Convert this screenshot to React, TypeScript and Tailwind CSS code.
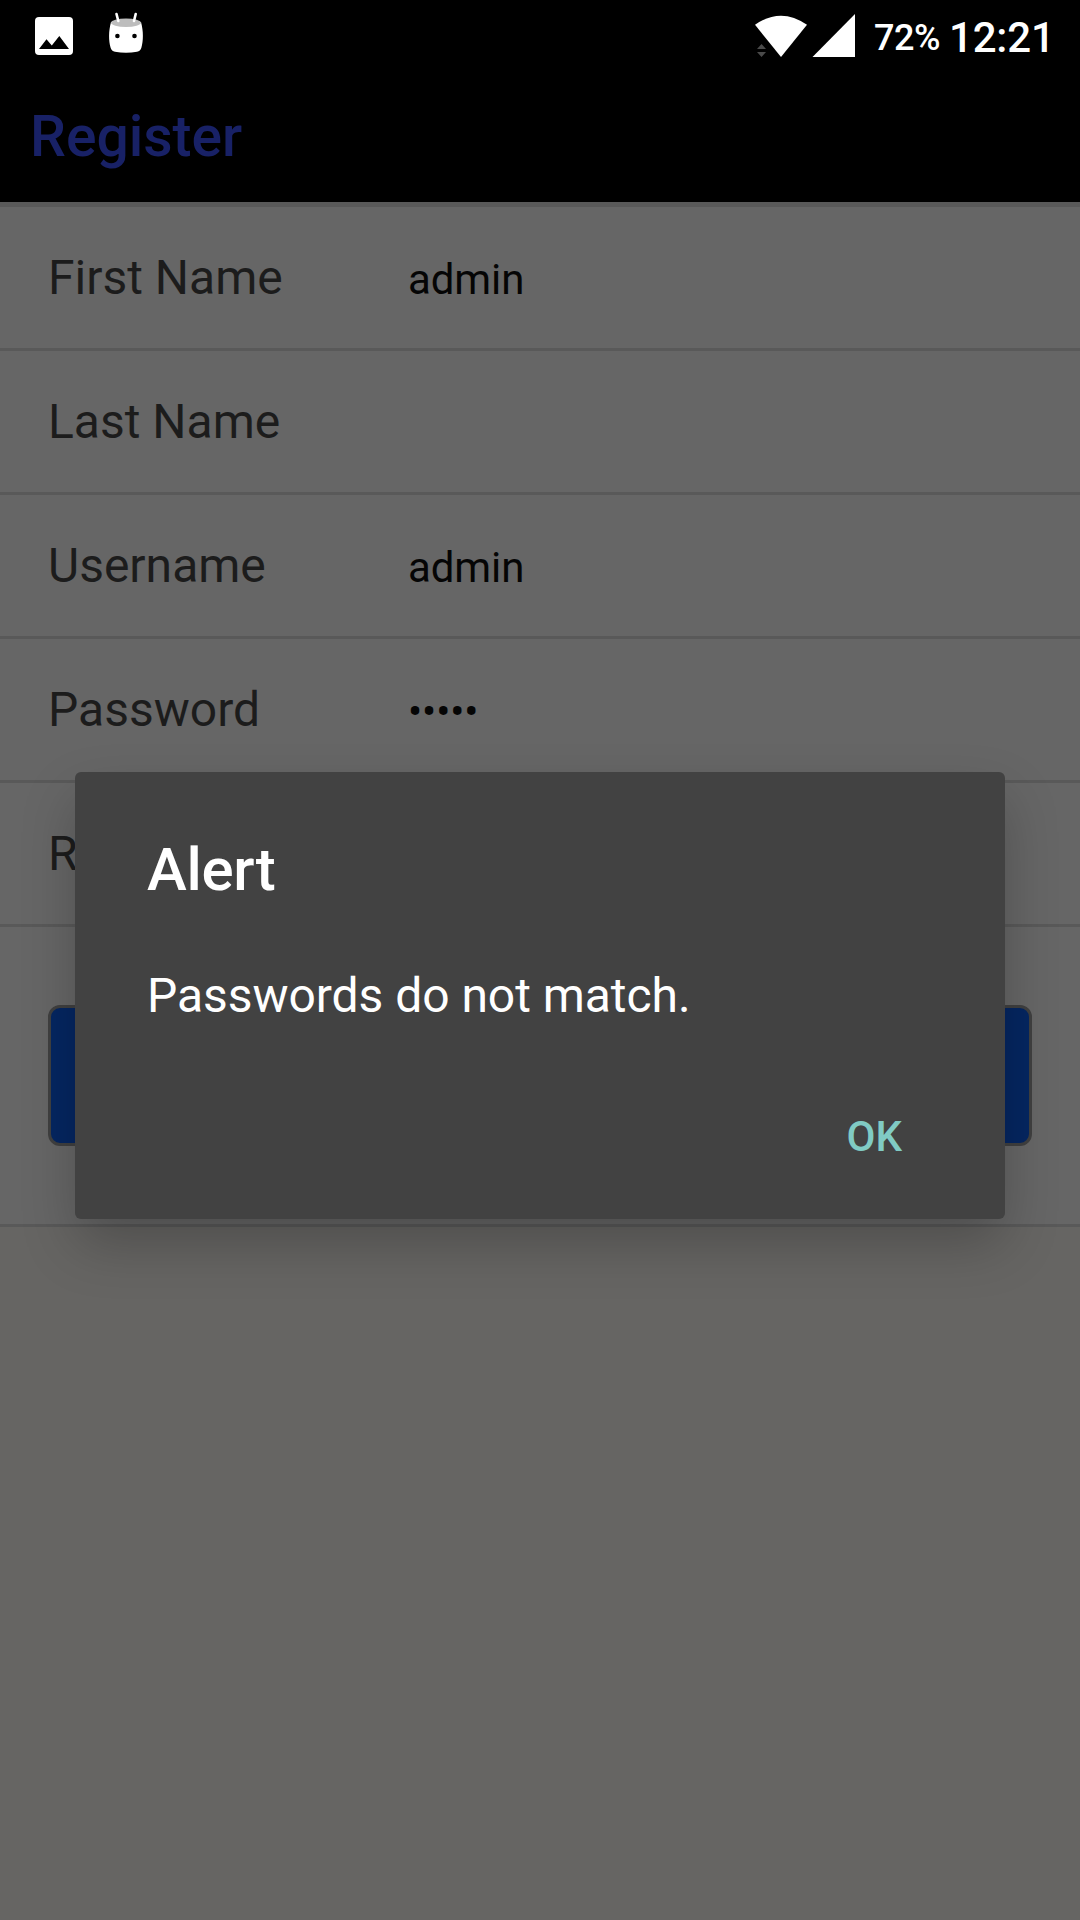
import React from "react";

function StatusBar() {
  return (
    <div className="flex h-[72px] items-start justify-between text-white">
      <svg className="h-[72px] w-[160px]" viewBox="0 0 160 72">
        <rect x="35" y="17" width="38" height="38" rx="4" fill="#fff" />
        <path d="M39 49 L46.5 39.3 L51.8 45.6 L59.3 36 L69 49 Z" fill="#000" />
        <path d="M111 22 C108.500 31 108.500 41 110.700 48 Q111.500 51 115 51.800 Q126 53.800 137 51.800 Q140.500 51 141.300 48 C143.500 41 143.500 31 141 22 Z" fill="#fff" />
        <ellipse cx="126" cy="22.700" rx="15" ry="4.200" fill="#bdbdbd" />
        <path d="M116.500 14 L118.300 21 M135.700 14 L134 21" stroke="#fff" strokeWidth="2.600" strokeLinecap="round" />
        <circle cx="117.400" cy="36" r="2.300" fill="#000" />
        <circle cx="134.500" cy="36" r="2.300" fill="#000" />
      </svg>
      <div className="flex font-medium">
        <svg className="h-[72px] w-[124px]" viewBox="750 0 124 72">
          <path d="M755 24.800 Q781 6.500 807 24.800 L781 57 Z" fill="#fff" />
          <path d="M855 14 V57 H812.500 Z" fill="#fff" />
          <path d="M757 49 H766 L761.500 44 Z M757 52 H766 L761.500 57 Z" fill="#4a4a4a" />
        </svg>
        <span className="w-[75px] pt-[13px] text-[36px] leading-[50px] tracking-[-0.5px] whitespace-nowrap">72%</span>
        <span className="w-[131px] pt-[13px] text-[42px] leading-[50px] tracking-[-0.2px] whitespace-nowrap">12:21</span>
      </div>
    </div>
  );
}

function Field({ label, value = "" }: { label: string; value?: string }) {
  return (
    <div className="flex h-[144px] items-center border-b-[3px] border-[#595959] pl-12">
      <span className="w-[360px] text-[48px] leading-[56px] text-[#1c1c1c]">{label}</span>
      <span className="pt-1 text-[42px] leading-[50px] tracking-[-0.1px] text-[#050505]">{value}</span>
    </div>
  );
}

function AlertDialog() {
  return (
    <div className="absolute top-[772px] left-[75px] flex h-[447px] w-[930px] flex-col rounded-[6px] bg-[#424242] px-[72px] pt-[63px] text-white shadow-[0_26px_56px_-2px_rgba(0,0,0,0.24)]">
      <h2 className="text-[60px] leading-[70px] font-medium tracking-[-0.3px]">Alert</h2>
      <p className="mt-[63px] text-[48px] leading-[56px] tracking-[-0.05px]">Passwords do not match.</p>
      <button className="mt-[88px] mr-[31px] self-end text-[42px] leading-[50px] font-medium text-[#80cbc4]">OK</button>
    </div>
  );
}

export default function App() {
  return (
    <div className="relative h-[1920px] w-[1080px] overflow-hidden bg-[#666563] font-['Roboto',sans-serif]">
      <header className="h-[202px] bg-black">
        <StatusBar />
        <h1 className="pt-[30px] pl-[30px] text-[57px] leading-[70px] font-medium text-[#182166]">Register</h1>
      </header>
      <main className="border-t-[5px] border-[#595959] bg-[#666666]">
        <Field label="First Name" value="admin" />
        <Field label="Last Name" />
        <Field label="Username" value="admin" />
        <Field label="Password" value="•••••" />
        <Field label="R" />
        <div className="h-[300px] border-b-[3px] border-[#595959] px-12 pt-[78px]">
          <div className="h-[141px] rounded-[12px] border-[3px] border-[#404040] bg-[#052661]" />
        </div>
      </main>
      <AlertDialog />
    </div>
  );
}
